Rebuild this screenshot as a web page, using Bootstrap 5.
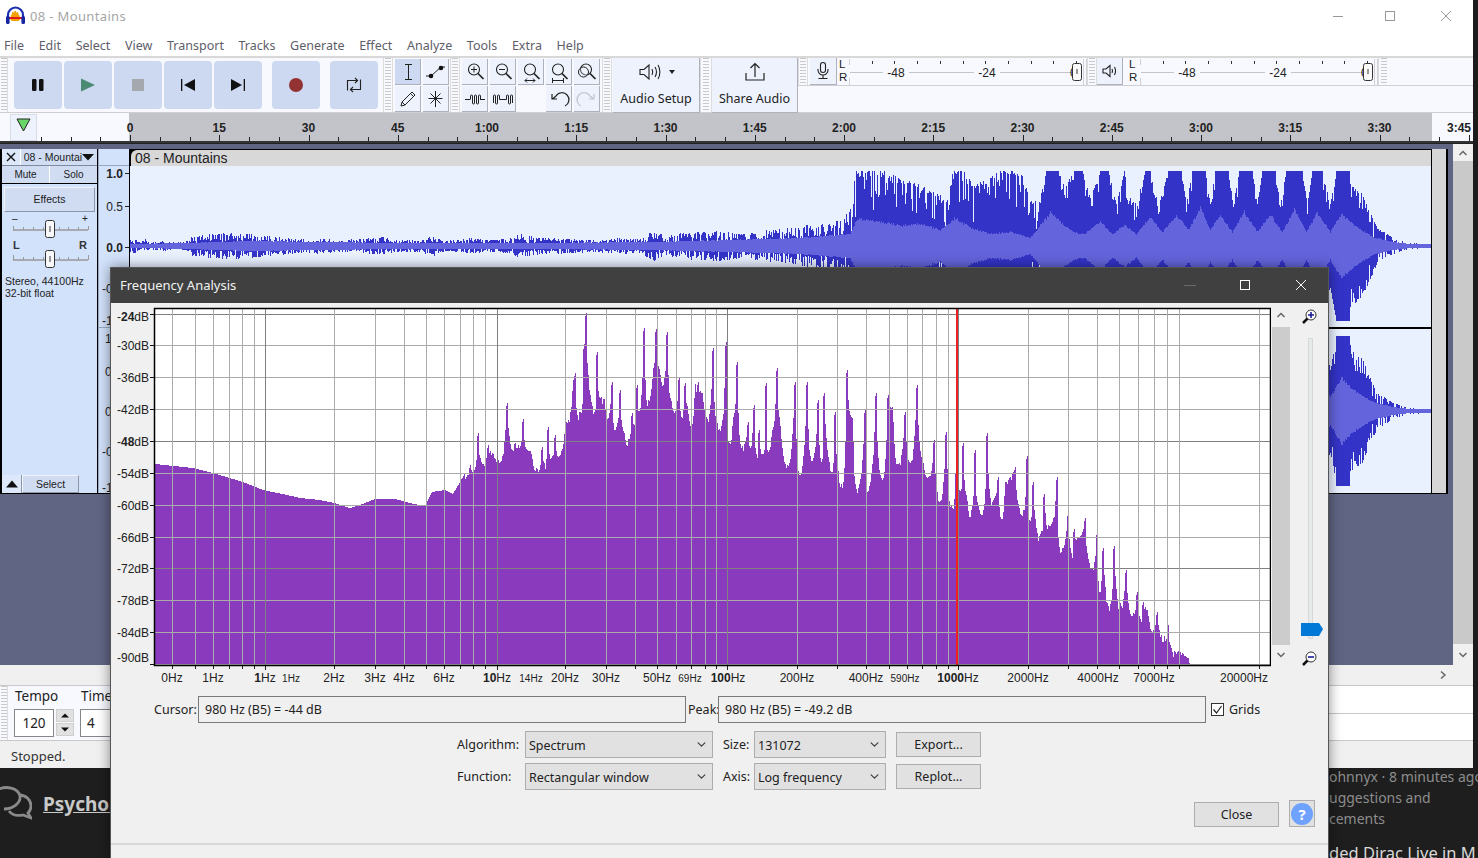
<!DOCTYPE html>
<html lang="en">
<head>
<meta charset="utf-8">
<title>08 - Mountains</title>
<link href="https://cdn.jsdelivr.net/npm/bootstrap@5.3.0/dist/css/bootstrap.min.css" rel="stylesheet">
<style>
html,body{margin:0;width:1478px;height:858px;overflow:hidden;background:#1e1e1e}
body{font-family:"Noto Sans","Open Sans",sans-serif;font-size:12.5px;line-height:1.2;color:#222;position:relative}
svg{display:block}
.app-top{height:768px}
.app-win{width:1473px;height:768px;background:#f0f0f0}
.edge-strip{width:5px;background:#1c1c1c}
.title-row{height:32px;background:#fff;color:#a6a6a6;font-size:13px;padding-left:6px}
.title-row .ttxt{margin-left:5px;letter-spacing:.35px;padding-top:2px}
.win-ctl{margin-left:auto}
.menu-row{height:24px;background:#fff;color:#5e5e6a;font-size:12.5px;padding-left:4px;padding-top:2px}
.menu-row span{margin-right:14.65px;white-space:nowrap}
.tool-row{height:57px;background:#f8f9ff;border-top:2px solid #d8d8d8;border-bottom:1px solid #cfcfcf}
.grip{width:10px;flex:none;border-left:1px solid #dcdcdc;border-right:1px solid #dcdcdc;background:repeating-linear-gradient(#c9c9c9 0 1px,transparent 1px 3px) center/6px 100% no-repeat}
.grip-a{width:8px;border-left:0}
.grip-w{width:12px}
.grip-m{width:10px}
.grip-e{width:11px;border-right:0}
.big-btn{width:48px;height:48px;background:#cdd9f0;border-radius:4px;flex:none}
.trans-panel{padding:3px 5px 0 6px;gap:2px;width:375px}
.sq-btn{width:26px;height:26px;background:#edf2fd;border-right:1px solid #aeb0ba;border-bottom:1px solid #aeb0ba;flex:none}
.sq-btn.on{background:#cdd9f0}
.sq-tall{height:27px}
.sq-mic{width:27px;margin-left:2px}
.tools-grid{padding:1px 1px 0 2px;gap:1px 2px;display:grid;grid-template-columns:26px 26px;grid-template-rows:26px 26px}
.zoom-grid{padding:1px 2px 0 2px;gap:1px 2px;display:grid;grid-template-columns:repeat(5,26px);grid-template-rows:26px 26px}
.slot-empty{background:transparent;border:0}
.wide-btn{width:87px;height:55px;background:#edf2fd;border-right:1px solid #aeb0ba;border-bottom:1px solid #aeb0ba;flex:none;font-size:12.5px;color:#222;padding-top:2px;margin-left:1px}
.wide-btn.share{width:86px;margin-left:0}
.wide-cap{margin-top:7px}
.spk-ico{margin-left:5px}
.meter-wrap{flex:1 1 auto}
.meter-top{height:28px;border-bottom:1px solid #cfcfd6}
.lr{font-family:"Liberation Sans",sans-serif;font-size:11.5px;line-height:13px;width:12px;padding-left:2px;color:#222;flex:none}
.lr-b{margin-left:4px;width:13px}
.ruler-row{height:30px;background:#f8f9ff;border-bottom:2px solid #333}
.track-zone{height:522px;background:#606584;border-top:1px solid #222}
.track-box{width:1449px;height:345px;margin-top:5px;background:#000;position:relative}
.sb-v{width:20px;margin-left:5px;background:#f0f0f0}
.sb-thumb{background:#c9c9c9;flex:1 1 auto}
.sb-arrow{height:17px;background:#f0f0f0;color:#666}
.sb-arrow-b{height:21px}
.tr-panel{width:98px;height:344px;background:#d2e2fb;border-left:2px solid #000;border-right:1px solid #000;font-family:"Liberation Sans",sans-serif;font-size:10px;color:#222}
.tr-head{height:17px;border-bottom:1px solid #7f8aa0}
.tr-x{width:19px;border-right:1px solid #fff;background:#dde8fb}
.tr-name{flex:1 1 auto;background:#cfdcf2;padding-left:3px;font-size:10.5px;white-space:nowrap;overflow:hidden}
.tr-mute{height:18px;background:#cfdcf2;border-bottom:1px solid #000}
.tr-mute div{flex:1 1 0;text-align:center;line-height:17px}
.tr-mute div+div{border-left:1px solid #fff}
.fx-btn{height:25px;margin:3px 2px 0 2px;background:#cfdcf2;border:1px solid #f0f4fc;border-right-color:#8f96a6;border-bottom-color:#8f96a6;line-height:23px;text-align:center;font-size:10.5px}
.tr-info{padding:0 0 0 3px;font-size:10.5px;line-height:12px;margin-top:7px}
.tr-foot{height:18px;margin-top:auto;background:#d2e2fb}
.tr-sel{width:57px;background:#cfdcf2;text-align:center;line-height:17px;border:1px solid #f0f4fc;border-right-color:#8f96a6;border-bottom-color:#8f96a6;font-size:10.5px}
.tr-arrow{width:20px;background:#dde8fb;border-right:1px solid #8f96a6}
.v-ruler{width:32px;background:#d2e2fb;flex:none;height:344px}
.wave-col{width:1301px;height:344px;background:#000;flex:none;padding-top:1px}
.wave-head{height:16px;background:#d8d8d8;border-radius:6px 0 0 0;margin-left:1px;font-family:"Liberation Sans",sans-serif;font-size:14px;line-height:16px;padding-left:4px;color:#222}
.right-gut{width:15px;background:#d6d6d6;border-left:1px solid #000;height:344px}
.hscroll{height:20px;background:#f0f0f0}
.hs-arrow{margin-right:25px}
.sel-row{height:56px;background:#f8f9ff;border-top:1px solid #c8c8c8;border-bottom:1px solid #c8c8c8}
.sel-col{padding:1px 0 0 6px;color:#222}
.sel-lbl{font-size:13.5px;line-height:18px;height:22px;white-space:nowrap;padding-left:1px}
.num-box{background:#fff;border:1px solid #868686;width:40px;height:28px;font-size:13.5px;line-height:26px;text-align:center;color:#222}
.num-short{width:34px;text-align:left;padding-left:6px}
.spin{width:18px;height:27px;gap:1px;margin-left:2px}
.spin div{flex:1;background:#e1e1e1;border:1px solid #cfcfcf}
.sel-right{flex:1 1 auto}
.sel-line{flex:1 1 0;background:#fff;border-bottom:1px solid #c8c8c8}
.status-row{height:27px;background:#f0f0f0;padding:4px 0 0 11px;font-size:13px;color:#333}
.forum-row{height:90px;background:#1e1e1e;color:#8d8d8d;position:relative;overflow:hidden}
.forum-left{width:111px;height:90px;overflow:hidden;flex:none;padding-top:17px}
.forum-brand{font-family:"Noto Sans",sans-serif;font-weight:700;font-size:19px;color:#c9c9c9;text-decoration:underline;margin-left:11px;white-space:nowrap;line-height:38px}
.forum-right{position:absolute;left:1329px;top:0;width:149px;height:90px;overflow:hidden;white-space:nowrap;font-size:14px}
.fr-line{line-height:21px}
.fr-first{margin-top:-2px}
.fr-big{font-size:16.5px;color:#d8d8d8;line-height:22px;margin-top:13px}
.freq-dlg{position:absolute;left:110px;top:267px;width:1219px;height:591px;background:#f0f0f0;border:1px solid #555;border-bottom:0;box-shadow:0 0 12px rgba(0,0,0,.45);font-size:12.5px;color:#222;z-index:5}
.dlg-title{height:35px;background:#404040;color:#f2f2f2;font-size:13px;padding-left:9px}
.dlg-plot{height:388px}
.sb-dlg{width:18px;height:362px;margin-left:1px;flex:none}
.sb-dlg .sb-thumb{background:#cccccc}
.sb-a1{height:24px}
.sb-a2{height:20px}
.dlg-line{height:27px;margin-top:5px;padding-left:43px}
.lbl-cur{width:44px;white-space:nowrap}
.lbl-peak{width:30px;margin-left:2px;white-space:nowrap}
.ro-box.form-control{width:488px;height:27px;min-height:27px;background:#f0f0f0;border:1px solid #7a7a7a;border-radius:0;padding:4px 6px 2px;font-size:12.5px;line-height:18px;color:#222}
.grid-check{margin-left:5px;font-size:12.5px;white-space:nowrap}
.grid-check .form-check-input{width:13px;height:13px;margin:0 5px 0 0;border:1px solid #333;border-radius:0;background-color:#fff;background-image:none;flex:none}
.chk-mark{margin-left:-18px;margin-right:5px}
.opt-line{height:27px;padding-left:346px}
.opt-a{margin-top:8px}
.opt-b{margin-top:5px}
.opt-lbl{width:68px;white-space:nowrap;flex:none}
.opt-lbl2{width:31px;margin-left:10px;white-space:nowrap;flex:none}
.freq-dlg .form-select{height:27px;min-height:27px;border-radius:0;background-color:#e1e1e1;border:1px solid #adadad;font-size:12.5px;line-height:18px;padding:3px 20px 1px 3px;background-position:right 5px center;background-size:11px 9px;color:#222;box-shadow:none}
.sel-a.form-select{width:188px}
.sel-b.form-select{width:132px}
.dlg-btn.btn{width:85px;height:25px;padding:0;margin-left:10px;border-radius:0;background:#e1e1e1;border:1px solid #adadad;color:#222;font-size:12.5px;line-height:23px;flex:none}
.close-line{padding-right:13px;margin-top:11px}
.help-btn{width:26px;height:27px;background:#e1e1e1;border:1px solid #adadad;margin-left:10px;margin-top:-1px}
.help-dot{width:22px;height:22px;border-radius:50%;background:#6fa1ff;color:#fff;font-weight:700;font-size:15px;line-height:22px;text-align:center}
.dlg-foot{height:15px;margin-top:auto;border-top:2px solid #d9d9d9}
</style>
</head>
<body>
<svg width="0" height="0" class="position-absolute">
  <symbol id="lens" viewBox="0 0 26 26"><circle cx="12" cy="10.500" r="5.500" fill="none" stroke="#222" stroke-width="1.100"/><path d="M16 14.500 21.500 20" stroke="#222" stroke-width="1.700"/></symbol>
</svg>
<div class="d-flex app-top">
 <div class="app-win d-flex flex-column">
  <div class="title-row d-flex align-items-center">
    <svg width="19" height="20" viewBox="0 0 19 20"><path d="M2 13V9a7.500 7.500 0 0 1 15 0v4" fill="none" stroke="#1b2fb0" stroke-width="2.200"/><path d="M4 13c1-1 1-6 2-4 0-4 1-4 2-2 .5-3 2-3 2.500 0 1-2 2-1 2 2 1-2 1 3 2 4l-2 2H6z" fill="#f2a200"/><rect x="3" y="11" width="13" height="2" fill="#e21a1a"/><rect x="0" y="10" width="3.600" height="8" rx="1.500" fill="#1426a0"/><rect x="15.400" y="10" width="3.600" height="8" rx="1.500" fill="#1426a0"/></svg>
    <span class="ttxt">08 - Mountains</span>
    <div class="win-ctl d-flex align-items-center">
      <svg width="56" height="32" viewBox="0 0 56 32"><path d="M27 16.500h10" stroke="#999"/></svg>
      <svg width="56" height="32" viewBox="0 0 56 32"><rect x="23.500" y="11.500" width="9" height="9" fill="none" stroke="#999"/></svg>
      <svg width="55" height="32" viewBox="0 0 55 32"><path d="M23 11l10 10M33 11 23 21" stroke="#999" fill="none"/></svg>
    </div>
  </div>
  <div class="menu-row d-flex align-items-center">
    <span>File</span><span>Edit</span><span>Select</span><span>View</span><span>Transport</span><span>Tracks</span><span>Generate</span><span>Effect</span><span>Analyze</span><span>Tools</span><span>Extra</span><span>Help</span>
  </div>
  <div class="tool-row d-flex">
    <div class="grip grip-a"></div>
    <div class="trans-panel d-flex">
      <div class="big-btn d-flex align-items-center justify-content-center"><svg width="14" height="14" viewBox="0 0 14 14"><rect x="1" y="1" width="4.500" height="12" rx="1.200" fill="#111"/><rect x="8" y="1" width="4.500" height="12" rx="1.200" fill="#111"/></svg></div>
      <div class="big-btn d-flex align-items-center justify-content-center"><svg width="16" height="16" viewBox="0 0 16 16"><path d="M1 1.500 15 8 1 14.500z" fill="#4b8a72"/></svg></div>
      <div class="big-btn d-flex align-items-center justify-content-center"><svg width="12" height="12" viewBox="0 0 12 12"><rect width="12" height="12" fill="#a6a8b0"/></svg></div>
      <div class="big-btn d-flex align-items-center justify-content-center"><svg width="16" height="14" viewBox="0 0 16 14"><rect x="1" y="1" width="1.300" height="12" fill="#111"/><path d="M15 1v12L4 7z" fill="#111"/></svg></div>
      <div class="big-btn d-flex align-items-center justify-content-center"><svg width="16" height="14" viewBox="0 0 16 14"><rect x="13.700" y="1" width="1.300" height="12" fill="#111"/><path d="M1 1v12l11-6z" fill="#111"/></svg></div>
      <div class="big-btn d-flex align-items-center justify-content-center ms-2"><svg width="16" height="16" viewBox="0 0 16 16"><circle cx="8" cy="8" r="7" fill="#933232"/></svg></div>
      <div class="big-btn d-flex align-items-center justify-content-center ms-2"><svg width="18" height="18" viewBox="0 0 18 18" fill="none" stroke="#222" stroke-width="1.100"><path d="M2.500 14.500V4.500h10M10 2l2.600 2.500L10 7"/><path d="M15.500 3.500v10h-10M8 11l-2.600 2.500L8 16"/></svg></div>
    </div>
    <div class="grip"></div>
    <div class="tools-grid">
      <div class="sq-btn on d-flex align-items-center justify-content-center"><svg width="16" height="18" viewBox="0 0 16 18" fill="none" stroke="#222"><path d="M8.500 2v14M5 1.500h7M5 16.500h7"/></svg></div>
      <div class="sq-btn d-flex align-items-center justify-content-center"><svg width="22" height="18" viewBox="0 0 22 18"><path d="M1 13h5l10-9h4" fill="none" stroke="#222"/><circle cx="6" cy="13" r="2.300" fill="#111"/><circle cx="16" cy="5" r="2.300" fill="#111"/></svg></div>
      <div class="sq-btn d-flex align-items-center justify-content-center"><svg width="18" height="18" viewBox="0 0 18 18" fill="none" stroke="#222"><path d="M2 16l1-4L13 2l3 3L6 15zM3 12l3 3M11.500 3.500l3 3"/></svg></div>
      <div class="sq-btn d-flex align-items-center justify-content-center"><svg width="18" height="18" viewBox="0 0 18 18" stroke="#222"><path d="M8.500 1v16M1.500 8.500h14M3.500 3.500l10 10M13.500 3.500l-10 10"/></svg></div>
    </div>
    <div class="grip"></div>
    <div class="zoom-grid">
      <div class="sq-btn"><svg width="26" height="26" viewBox="0 0 26 26"><use href="#lens"/><path d="M9 10.500h6M12 7.500v6" stroke="#222"/></svg></div>
      <div class="sq-btn"><svg width="26" height="26" viewBox="0 0 26 26"><use href="#lens"/><path d="M9 10.500h6" stroke="#222"/></svg></div>
      <div class="sq-btn"><svg width="26" height="26" viewBox="0 0 26 26"><use href="#lens"/><path d="M7 21.500h10M9 19.500l-2 2 2 2M15 19.500l2 2-2 2" stroke="#222" fill="none"/></svg></div>
      <div class="sq-btn"><svg width="26" height="26" viewBox="0 0 26 26"><use href="#lens"/><path d="M6.500 21.500h11M6.500 19v5M17.500 19v5" stroke="#222" fill="none"/></svg></div>
      <div class="sq-btn"><svg width="26" height="26" viewBox="0 0 26 26"><use href="#lens"/><circle cx="9.500" cy="13" r="5" fill="#edf2fd" fill-opacity=".3" stroke="#222"/></svg></div>
      <div class="sq-btn"><svg width="26" height="26" viewBox="0 0 26 26"><path d="M3 13.500h5M18 13.500h5M8.500 13.500V10a1 1 0 0 1 2 0v7a1 1 0 0 0 2 0v-7a1 1 0 0 1 2 0v7a1 1 0 0 0 2 0v-7a1 1 0 0 1 2 0v3.500" fill="none" stroke="#222"/></svg></div>
      <div class="sq-btn"><svg width="26" height="26" viewBox="0 0 26 26"><path d="M3.500 17V10a1 1 0 0 1 2 0v7a1 1 0 0 0 2 0v-7a1 1 0 0 1 2 0v3.500h7V10a1 1 0 0 1 2 0v7a1 1 0 0 0 2 0v-7a1 1 0 0 1 2 0v7" fill="none" stroke="#222"/></svg></div>
      <div class="slot-empty"></div>
      <div class="sq-btn"><svg width="26" height="26" viewBox="0 0 26 26"><path d="M19 20a7 7 0 1 0-9-10L6.500 13M6 8v5h5" fill="none" stroke="#222" stroke-width="1.200"/></svg></div>
      <div class="sq-btn"><svg width="26" height="26" viewBox="0 0 26 26"><path d="M7 20a7 7 0 1 1 9-10l3.500 3M20 8v5h-5" fill="none" stroke="#c2c5cc" stroke-width="1.200"/></svg></div>
    </div>
    <div class="grip"></div>
    <div class="wide-btn d-flex flex-column align-items-center">
      <svg width="44" height="24" viewBox="0 0 44 24" fill="none" stroke="#222" stroke-width="1.100" class="spk-ico"><path d="M3 9.500h4l5-4.500v14l-5-4.500H3z"/><path d="M15 9c1 2 1 4 0 6M18 7c1.800 3 1.800 7 0 10M21 5c2.500 4 2.500 10 0 14"/><path d="M32 10h6l-3 4z" fill="#222" stroke="none"/></svg>
      <div class="wide-cap">Audio Setup</div>
    </div>
    <div class="grip grip-w"></div>
    <div class="wide-btn share d-flex flex-column align-items-center">
      <svg width="24" height="24" viewBox="0 0 24 24" fill="none" stroke="#222" stroke-width="1.200"><path d="M12 17V4M7.500 8 12 3.500 16.500 8M3 13v7h18v-7"/></svg>
      <div class="wide-cap">Share Audio</div>
    </div>
    <div class="meter-wrap d-flex flex-column">
      <div class="meter-top d-flex">
        <div class="grip"></div>
        <div class="sq-btn sq-tall sq-mic d-flex align-items-center justify-content-center"><svg width="16" height="20" viewBox="0 0 16 20" fill="none" stroke="#222" stroke-width="1.100"><rect x="5.500" y="1.500" width="5" height="10" rx="2.500"/><path d="M3 8v1a5 5 0 0 0 10 0V8M8 14v3M3.500 17.500h9"/></svg></div>
        <div class="lr">L<br>R</div>
        <svg class="meter-svg flex-shrink-0" width="238" height="27"></svg>
        <div class="grip grip-m"></div>
        <div class="sq-btn sq-tall d-flex align-items-center justify-content-center"><svg width="18" height="18" viewBox="0 0 18 18" fill="none" stroke="#222" stroke-width="1.100"><path d="M2 7h3l4-3.500v11L5 11H2z"/><path d="M11 7c.7 1.300.7 2.700 0 4M13.500 5c1.300 2.500 1.300 5.500 0 8"/></svg></div>
        <div class="lr lr-b">L<br>R</div>
        <svg class="meter-svg flex-shrink-0" width="238" height="27"></svg>
        <div class="grip grip-e"></div>
      </div>
    </div>
  </div>
  <div class="ruler-row"><svg id="time-ruler" width="1473" height="28" viewBox="0 113 1473 28"></svg></div>
  <div class="track-zone d-flex">
    <div class="track-box d-flex">
      <div class="tr-panel d-flex flex-column">
        <div class="tr-head d-flex">
          <div class="tr-x d-flex align-items-center justify-content-center"><svg width="10" height="10" viewBox="0 0 10 10"><path d="M1 1l8 8M9 1 1 9" stroke="#111" stroke-width="1.400"/></svg></div>
          <div class="tr-name d-flex align-items-center justify-content-between"><span>08 - Mountai</span><svg width="12" height="8" viewBox="0 0 12 8" class="flex-shrink-0 me-1"><path d="M0 1h12L6 7.500z" fill="#111"/></svg></div>
        </div>
        <div class="tr-mute d-flex"><div>Mute</div><div>Solo</div></div>
        <div class="fx-btn">Effects</div>
        <svg width="95" height="56" viewBox="0 1 95 56" class="flex-shrink-0">
          <text x="10" y="11" font-family="Liberation Sans" font-size="10" fill="#222">–</text><text x="80" y="11" font-family="Liberation Sans" font-size="10" fill="#222">+</text>
          <path d="M11 19h75" stroke="#999" stroke-width="1.500"/><path d="M11.500 15v4M21.500 16v3M31.500 16v3M41.500 16v3M57.500 16v3M66.500 16v3M76.500 16v3M86.500 15v4" stroke="#999"/>
          <rect x="43.500" y="9.500" width="9" height="17" rx="2" fill="#f8f8f8" stroke="#333"/><rect x="47" y="15" width="2" height="6" fill="#999"/>
          <text x="11" y="38" font-family="Liberation Sans" font-size="11" font-weight="700" fill="#333">L</text><text x="77" y="38" font-family="Liberation Sans" font-size="11" font-weight="700" fill="#333">R</text>
          <path d="M11 49h75" stroke="#999" stroke-width="1.500"/><path d="M11.500 44v5M21.500 46v3M31.500 46v3M41.500 46v3M57.500 46v3M66.500 46v3M76.500 46v3M86.500 44v5" stroke="#999"/>
          <rect x="43.500" y="39.500" width="9" height="17" rx="2" fill="#f8f8f8" stroke="#333"/><rect x="47" y="45" width="2" height="6" fill="#999"/>
        </svg>
        <div class="tr-info">Stereo, 44100Hz<br>32-bit float</div>
        <div class="tr-foot d-flex"><div class="tr-arrow d-flex align-items-center justify-content-center"><svg width="12" height="8" viewBox="0 0 12 8"><path d="M0 7.500h12L6 .5z" fill="#111"/></svg></div><div class="tr-sel">Select</div></div>
      </div>
      <div class="v-ruler"><svg id="v-ruler" width="32" height="344" viewBox="98 149 32 344"></svg></div>
      <div class="wave-col d-flex flex-column">
        <div class="wave-head">08 - Mountains</div>
        <svg id="wave" width="1301" height="327" viewBox="130 166 1301 327" shape-rendering="crispEdges"></svg>
      </div>
      <div class="right-gut"></div>
    </div>
    <div class="sb-v d-flex flex-column">
      <div class="sb-arrow d-flex align-items-center justify-content-center"><svg width="10" height="8" viewBox="0 0 10 8"><path d="M1.500 6 5 2.500 8.500 6" fill="none" stroke="#666" stroke-width="1.500"/></svg></div>
      <div class="sb-thumb"></div>
      <div class="sb-arrow sb-arrow-b d-flex align-items-center justify-content-center"><svg width="10" height="8" viewBox="0 0 10 8"><path d="M1.500 2 5 5.500 8.500 2" fill="none" stroke="#666" stroke-width="1.500"/></svg></div>
    </div>
  </div>
  <div class="hscroll d-flex align-items-center justify-content-end"><svg class="hs-arrow" width="10" height="10" viewBox="0 0 10 10"><path d="M3 1.500 7 5 3 8.500" fill="none" stroke="#666" stroke-width="1.500"/></svg></div>
  <div class="sel-row d-flex">
    <div class="grip grip-a"></div>
    <div class="sel-col">
      <div class="sel-lbl">Tempo</div>
      <div class="d-flex"><div class="num-box">120</div><div class="spin d-flex flex-column"><div class="d-flex align-items-center justify-content-center"><svg width="8" height="5" viewBox="0 0 8 5"><path d="M0 4.500h8L4 .5z" fill="#111"/></svg></div><div class="d-flex align-items-center justify-content-center"><svg width="8" height="5" viewBox="0 0 8 5"><path d="M0 .5h8L4 4.500z" fill="#111"/></svg></div></div></div>
    </div>
    <div class="sel-col">
      <div class="sel-lbl">Time</div>
      <div class="num-box num-short">4</div>
    </div>
    <div class="sel-right d-flex flex-column ms-3"><div class="sel-line"></div><div class="sel-line border-0"></div></div>
  </div>
  <div class="status-row d-flex align-items-center"><span>Stopped.</span></div>
 </div>
 <div class="edge-strip"></div>
</div>
<div class="forum-row d-flex">
  <div class="forum-left d-flex align-items-start">
    <svg width="32" height="36" viewBox="0 0 32 36" class="flex-shrink-0" fill="none" stroke="#8a8a8a" stroke-width="2.800"><path d="M-3 5C6 0 18 3 20 11 21 18 13 24 4 24"/><path d="M19 10C26 10 31 15 31 21 31 25 29 27 28 28L31 33 23 30C18 31 12 30 9 26"/></svg>
    <span class="forum-brand">Psychoa</span>
  </div>
  <div class="forum-right">
    <div class="fr-line fr-first">ohnnyx · 8 minutes ago</div>
    <div class="fr-line">uggestions and</div>
    <div class="fr-line">cements</div>
    <div class="fr-big">ded Dirac Live in M</div>
  </div>
</div>
<div class="freq-dlg d-flex flex-column">
  <div class="dlg-title d-flex align-items-center">
    <span>Frequency Analysis</span>
    <div class="d-flex ms-auto">
      <svg width="56" height="35" viewBox="0 0 56 35"><path d="M24 17.500h12" stroke="#6a6a6a"/></svg>
      <svg width="56" height="35" viewBox="0 0 56 35"><rect x="24.500" y="12.500" width="9" height="9" fill="none" stroke="#fff"/></svg>
      <svg width="56" height="35" viewBox="0 0 56 35"><path d="M24 12l10 10M34 12 24 22" stroke="#fff" fill="none"/></svg>
    </div>
  </div>
  <div class="dlg-plot d-flex">
    <svg id="spec" width="1160" height="388" viewBox="111 303 1160 388" class="flex-shrink-0"></svg>
    <div class="sb-dlg d-flex flex-column">
      <div class="sb-arrow sb-a1 d-flex align-items-center justify-content-center"><svg width="10" height="8" viewBox="0 0 10 8"><path d="M1.500 6 5 2.500 8.500 6" fill="none" stroke="#666" stroke-width="1.500"/></svg></div>
      <div class="sb-thumb"></div>
      <div class="sb-arrow sb-a2 d-flex align-items-center justify-content-center"><svg width="10" height="8" viewBox="0 0 10 8"><path d="M1.500 2 5 5.500 8.500 2" fill="none" stroke="#666" stroke-width="1.500"/></svg></div>
    </div>
    <svg width="39" height="388" viewBox="1290 303 39 388" class="flex-shrink-0">
      <rect x="1308.500" y="338.500" width="4" height="300" fill="#e6eae8" stroke="#d5d8d6"/>
      <path d="M1301 623h18l4 6-4 7h-18z" fill="#0078d7"/>
      <path d="M1303 323l5-5" stroke="#111" stroke-width="2.500"/><circle cx="1311" cy="315" r="5" fill="#fff" stroke="#333"/><path d="M1308 315h6M1311 312v6" stroke="#1a1a9a" stroke-width="1.600"/>
      <path d="M1303 665l5-5" stroke="#111" stroke-width="2.500"/><circle cx="1311" cy="657" r="5" fill="#fff" stroke="#333"/><path d="M1308 657h6" stroke="#1a1a9a" stroke-width="1.600"/>
    </svg>
  </div>
  <div class="dlg-line d-flex align-items-center">
    <div class="lbl-cur">Cursor:</div>
    <div class="form-control ro-box">980 Hz (B5) = -44 dB</div>
    <div class="lbl-peak">Peak:</div>
    <div class="form-control ro-box">980 Hz (B5) = -49.2 dB</div>
    <div class="grid-check d-flex align-items-center"><input class="form-check-input" type="checkbox" checked aria-label="Grids"><svg class="chk-mark" width="13" height="13" viewBox="0 0 13 13"><path d="M2.500 6.500l3 3.500 5-7" fill="none" stroke="#222" stroke-width="1.200"/></svg><span>Grids</span></div>
  </div>
  <div class="opt-line opt-a d-flex align-items-center">
    <div class="opt-lbl">Algorithm:</div>
    <select class="form-select sel-a" aria-label="Algorithm"><option>Spectrum</option></select>
    <div class="opt-lbl2">Size:</div>
    <select class="form-select sel-b" aria-label="Size"><option>131072</option></select>
    <button class="btn dlg-btn" type="button">Export...</button>
  </div>
  <div class="opt-line opt-b d-flex align-items-center">
    <div class="opt-lbl">Function:</div>
    <select class="form-select sel-a" aria-label="Function"><option>Rectangular window</option></select>
    <div class="opt-lbl2">Axis:</div>
    <select class="form-select sel-b" aria-label="Axis"><option>Log frequency</option></select>
    <button class="btn dlg-btn" type="button">Replot...</button>
  </div>
  <div class="close-line d-flex justify-content-end align-items-center">
    <button class="btn dlg-btn" type="button">Close</button>
    <div class="help-btn d-flex align-items-center justify-content-center"><div class="help-dot">?</div></div>
  </div>
  <div class="dlg-foot"></div>
</div>

<script src="https://cdn.jsdelivr.net/npm/bootstrap@5.3.0/dist/js/bootstrap.bundle.min.js"></script>
<script>
(function(){
  var seed=12345;function R(){seed=(seed*1664525+1013904223)>>>0;return seed/4294967296;}
  function lerp(pts,x,sharp){for(var i=0;i<pts.length-1;i++){if(x>=pts[i][0]&&x<=pts[i+1][0]){var t=(x-pts[i][0])/(pts[i+1][0]-pts[i][0]||1);var a=pts[i][1],b=pts[i+1][1];if(sharp){if(b<a){t=Math.pow(t,2.5);}else{t=1-Math.pow(1-t,2.5);}}return a+t*(b-a);}}return pts[pts.length-1][1];}
  function tx(x,y,s,o){o=o||{};return '<text x="'+x+'" y="'+y+'" font-family="Liberation Sans" font-size="'+(o.fs||12)+'" fill="'+(o.c||'#222')+'"'+(o.a?' text-anchor="'+o.a+'"':'')+(o.w?' font-weight="'+o.w+'"':'')+'>'+s+'</text>';}

  var h='<rect x="0" y="113" width="1473" height="28" fill="#f8f9ff"/><rect x="10.500" y="114.500" width="26" height="26" fill="#edf2fd" stroke="#d8dce8"/><path d="M17 119h13l-6.500 12z" fill="#6ad66a" stroke="#222"/><rect x="129" y="113" width="1303" height="28" fill="#c3c4c9"/>';
  var labs=['0','15','30','45','1:00','1:15','1:30','1:45','2:00','2:15','2:30','2:45','3:00','3:15','3:30','3:45'];
  var step=89.25;
  for(var i=-3;i<48;i++){var x=130+i*step/3;if(x>1470)break;var maj=i>=0&&i%3===0;h+='<path d="M'+Math.round(x)+'.5 '+(maj?135:137)+'V141" stroke="#222"/>';}
  labs.forEach(function(s,i){var x=130+i*step;if(i===15)x=1459;h+=tx(x,132,s,{a:'middle',w:700,fs:12,c:'#222'});});
  document.getElementById('time-ruler').innerHTML=h;

  document.querySelectorAll('.meter-svg').forEach(function(m){
    var s='<path d="M.5 1V7M.5 20v7" stroke="#cfcfd6"/><path d="M1 14.500H233" stroke="#c4c4cc"/>';
    for(var i=1;i<11;i++){var xx=Math.round(i*22.7);s+='<path d="M'+(xx+.5)+' 3v3" stroke="#333"/>';}
    s+='<rect x="34" y="8" width="26" height="13" fill="#f8f9ff"/><rect x="125" y="8" width="26" height="13" fill="#f8f9ff"/>';
    s+=tx(47,19,'-48',{a:'middle',fs:12})+tx(138,19,'-24',{a:'middle',fs:12})+tx(221,19,'0',{fs:12});
    s+='<rect x="223.500" y="5.500" width="9" height="17" rx="2" fill="#fafafa" stroke="#333"/><rect x="227" y="11" width="2" height="5" fill="#999"/><path d="M234.500 1v27M237.500 1v27" stroke="#cfcfd6"/>';
    m.innerHTML=s;
  });

  var v='<rect x="98" y="149" width="32" height="344" fill="#d2e2fb"/><path d="M98 165.500h32M98 327.500h13M98.500 149v344" stroke="#9aa6bc"/><path d="M129.500 149V493" stroke="#000"/>';
  [[173,'1.0',700],[206,'0.5',400],[247,'0.0',700]].forEach(function(a){
    v+=tx(123,a[0]+5,a[1],{a:'end',fs:12,w:a[2]});v+='<path d="M125 '+a[0]+'.5h4" stroke="#222"/>';
  });
  [[288,'-0',102],[320,'-1',102],[338,'1',105],[371,'0',105],[411,'0',105],[451,'-0',102],[487,'-1',102]].forEach(function(a){v+=tx(a[2],a[0]+5,a[1],{fs:12});});
  document.getElementById('v-ruler').innerHTML=v;

  var peak=[[130,6],[135,8],[140,3],[145,7],[150,3],[160,6],[170,4],[180,4],[188,5],[192,10],[200,11],[215,13],[240,13],[260,11],[280,9],[300,7],[320,8],[340,6],[360,7],[380,9],[400,6],[420,6],[433,10],[445,5],[470,8],[490,6],[510,8],[520,12],[535,9],[560,8],[590,6],[620,8],[640,7],[653,16],[665,10],[680,13],[700,14],[715,15],[730,14],[745,12],[765,16],[790,18],[810,22],[830,22],[845,30],[852,45],[855,75],[875,75],[895,70],[915,62],[933,52],[948,45],[952,74],[962,75],[972,60],[985,64],[1000,75],[1020,74],[1030,44],[1040,46],[1046,75],[1058,75],[1064,60],[1074,75],[1082,75],[1090,48],[1100,75],[1108,75],[1116,42],[1124,75],[1128,50],[1136,42],[1145,75],[1150,75],[1158,40],[1168,75],[1181,75],[1186,42],[1192,75],[1205,75],[1210,42],[1215,75],[1228,75],[1233,42],[1239,75],[1252,75],[1257,42],[1262,75],[1275,75],[1280,42],[1286,75],[1302,75],[1307,42],[1312,75],[1322,75],[1330,42],[1336,75],[1349,75],[1351,60],[1362,52],[1370,33],[1377,18],[1393,8],[1409,3],[1431,2]];
  var rms=[[130,2],[190,3],[250,5],[400,3],[530,3],[650,4],[800,8],[850,12],[857,27],[880,24],[900,20],[920,22],[940,16],[955,28],[970,18],[990,12],[1010,14],[1030,8],[1050,33],[1072,14],[1084,12],[1100,24],[1112,12],[1124,21],[1136,12],[1150,28],[1162,14],[1176,31],[1188,16],[1200,38],[1210,16],[1220,31],[1232,14],[1244,34],[1257,14],[1270,31],[1282,14],[1294,36],[1306,14],[1317,33],[1330,14],[1341,33],[1352,22],[1372,9],[1393,4],[1409,2],[1431,2]];
  function col(cy){
    var a='',b='';
    for(var x=130;x<1431;x++){
      var p=lerp(peak,x),r=lerp(rms,x);
      var solid=(p>=74.9)&&(x>=1046);
      var up,dn;
      if(solid){up=dn=75;}
      else if(x>855&&x<1046){up=Math.min(75,p-Math.pow(R(),5)*38+5*(R()-.5));dn=Math.min(75,p-Math.pow(R(),5)*38+5*(R()-.5));}
      else if(x>855){up=p-Math.pow(R(),3)*18;dn=p-Math.pow(R(),3)*18;}
      else{up=p*(1-.75*Math.pow(R(),1.5));dn=p*(1-.75*Math.pow(R(),1.5));}
      up=Math.max(1.5,up);dn=Math.max(1.5,dn);
      a+='M'+x+'.5 '+(cy-up).toFixed(0)+'V'+(cy+dn).toFixed(0);
      var rn=r*(1+(R()-.5)*.12);
      b+='M'+x+'.5 '+(cy-rn).toFixed(0)+'V'+(cy+rn).toFixed(0);
    }
    return '<path d="'+a+'" stroke="#3333c8" fill="none"/><path d="'+b+'" stroke="#6464dc" fill="none"/>';
  }
  var w='<rect x="130" y="166" width="1301" height="327" fill="#e9f1ff"/>'+col(246)+col(411);
  w+='<rect x="130" y="327" width="1301" height="2" fill="#000"/>';
  document.getElementById('wave').innerHTML=w;

  var sp=[[155,464],[193,468],[213,473],[243,482],[263,490],[283,494],[300,498],[320,500],[335,503],[350,508],[360,505],[375,499],[395,499],[410,503],[425,506],[432,492],[445,490],[453,494],[460,482],[470,465],[474,468],[478,433],[483,462],[488,445],[495,453],[500,458],[507,403],[512,440],[518,443],[520,442],[523,419],[527,448],[532,450],[535,465],[538,468],[542,447],[545,460],[548,427],[551,457],[555,435],[558,452],[563,443],[565,420],[570,410],[573,375],[575,373],[578,410],[582,412],[583,340],[586,313],[588,360],[592,397],[595,407],[597,352],[600,393],[605,395],[607,415],[612,382],[615,428],[620,390],[623,422],[628,437],[632,413],[635,420],[637,385],[639,408],[644,328],[648,397],[653,367],[656,329],[660,368],[663,380],[667,332],[671,392],[675,410],[679,377],[682,412],[685,383],[688,403],[692,422],[695,383],[698,382],[703,390],[707,415],[712,378],[713,348],[717,412],[720,427],[726,342],[730,440],[733,415],[737,362],[742,443],[748,422],[750,443],[754,405],[758,453],[759,430],[763,453],[766,383],[768,450],[772,427],[777,368],[780,415],[787,463],[795,382],[800,470],[807,382],[812,458],[818,400],[822,457],[824,393],[832,463],[835,412],[842,483],[847,370],[853,417],[857,488],[865,410],[867,487],[876,393],[882,475],[888,395],[893,405],[898,463],[905,412],[910,460],[917,385],[923,457],[928,475],[934,440],[940,497],[946,432],[952,503],[957,425],[960,488],[963,443],[967,490],[970,512],[975,450],[978,500],[982,512],[987,433],[992,497],[998,477],[1002,517],[1005,480],[1010,475],[1015,467],[1022,510],[1027,456],[1030,518],[1033,482],[1040,533],[1044,494],[1050,523],[1057,477],[1060,547],[1068,513],[1072,550],[1074,529],[1078,535],[1085,518],[1088,548],[1092,567],[1097,532],[1100,587],[1103,548],[1110,602],[1114,546],[1120,602],[1126,570],[1132,613],[1137,592],[1142,618],[1143,602],[1148,607],[1152,628],[1157,612],[1163,633],[1168,625],[1173,647],[1180,650],[1184,653],[1189,658],[1190,664]];
  var s='<rect x="155" y="309" width="1115" height="356" fill="#fff"/>';
  var ys={};
  for(var px=155;px<1191;px++){
    var y=lerp(sp,px+.5,px>464);
    if(px>464&&y<655){
      var bar=Math.floor(px/1.34);
      var sd=Math.sin(bar*12.9898)*43758.5453;sd-=Math.floor(sd);
      y+=sd*6; if(sd<.1)y+=9;
    }
    ys[px]=Math.min(665,Math.round(y));
  }
  sp.forEach(function(p,i){
    if(p[0]<=464||i===0||i===sp.length-1)return;
    if(p[1]<sp[i-1][1]&&p[1]<sp[i+1][1]){ys[p[0]]=p[1];ys[p[0]-1]=Math.min(ys[p[0]-1],p[1]+3);}
  });
  var d='M155 665';
  for(var q=155;q<1191;q++){d+='V'+ys[q]+'H'+(q+1);}
  d+='V665Z';
  s+='<path d="'+d+'" fill="#8a3abc" shape-rendering="crispEdges"/>';
  var hl=[[314,1],[345,0],[377,0],[409,0],[441,1],[473,0],[505,0],[537,0],[568,1],[600,0],[632,0],[664,0]];
  hl.forEach(function(a){s+='<rect x="155" y="'+a[0]+'" width="1115" height="1" fill="'+(a[1]?'#808080':'#ababab')+'"/>';});
  var gl=[172,195,213,229,242,254,334,375,404,426,444,460,473,485,565,606,635,657,676,691,705,716,797,837,866,889,907,922,936,948,1028,1068,1097,1119,1138,1154,1167,1179,1259];
  var gm=[265,497,727,958];
  gl.forEach(function(x){s+='<rect x="'+x+'" y="309" width="1" height="356" fill="#ababab"/><rect x="'+x+'" y="665" width="1" height="4" fill="#222"/>';});
  gm.forEach(function(x){s+='<rect x="'+x+'" y="309" width="1" height="356" fill="#808080"/><rect x="'+x+'" y="665" width="1" height="5" fill="#222"/>';});
  s+='<rect x="956" y="309" width="2" height="356" fill="#f02020"/>';
  s+='<rect x="154.500" y="308.500" width="1116" height="357" fill="none" stroke="#000" stroke-width="1.500"/>';
  var yl=[[321,'-','24','dB'],[350,'-30dB'],[382,'-36dB'],[414,'-42dB'],[446,'-','48','dB'],[478,'-54dB'],[510,'-60dB'],[542,'-66dB'],[573,'-72dB'],[605,'-78dB'],[637,'-84dB'],[662,'-90dB']];
  function bold(p,b,e){return p+'<tspan font-weight="700">'+b+'</tspan>'+e;}
  yl.forEach(function(a,i){s+=tx(149,a[0],a.length>2?bold(a[1],a[2],a[3]):a[1],{a:'end',fs:12});var ty=hl[i][0];s+='<rect x="150" y="'+ty+'" width="4" height="1" fill="#111"/>';});
  var xl=[[172,'0Hz',12],[213,'1Hz',12],[265,bold('','1','Hz'),12],[291,'1Hz',10],[334,'2Hz',12],[375,'3Hz',12],[404,'4Hz',12],[444,'6Hz',12],[497,bold('','10','Hz'),12],[531,'14Hz',10],[565,'20Hz',12],[606,'30Hz',12],[657,'50Hz',12],[690,'69Hz',10],[728,bold('','100','Hz'),12],[797,'200Hz',12],[866,'400Hz',12],[905,'590Hz',10],[958,bold('','1000','Hz'),12],[1028,'2000Hz',12],[1098,'4000Hz',12],[1154,'7000Hz',12],[1244,'20000Hz',12]];
  xl.forEach(function(a){s+=tx(a[0],682,a[1],{a:'middle',fs:a[2]});});
  document.getElementById('spec').innerHTML=s;
})();
</script>
</body>
</html>
